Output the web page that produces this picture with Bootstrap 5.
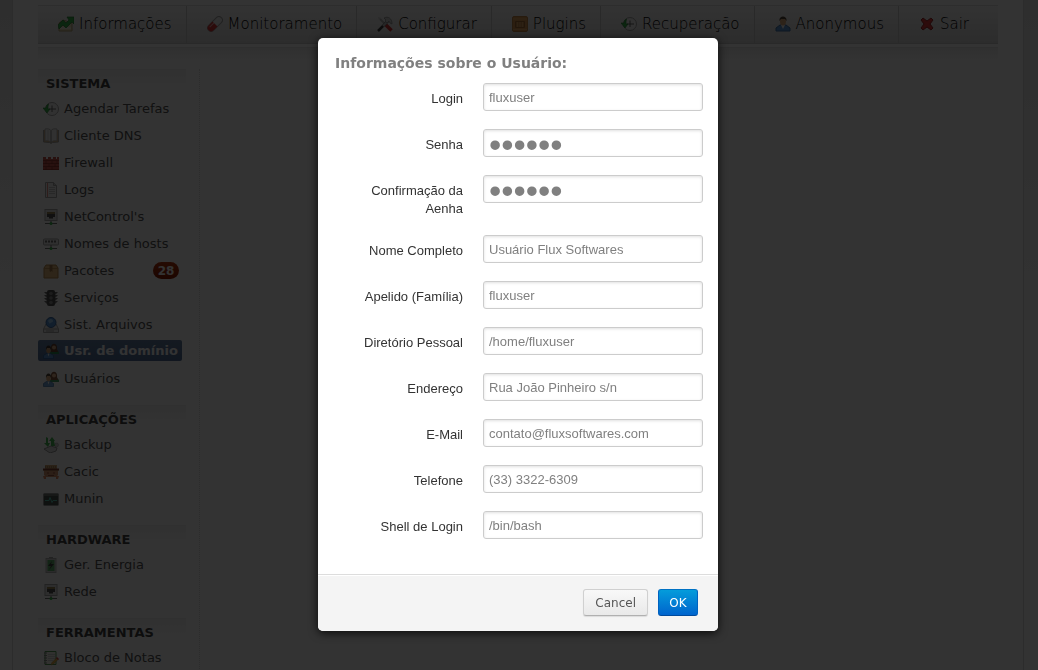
<!DOCTYPE html>
<html lang="pt-br">
<head>
<meta charset="utf-8">
<meta name="viewport" content="width=device-width, initial-scale=1">
<title>Usuários de domínio</title>
<link href="https://cdn.jsdelivr.net/npm/bootstrap@5.3.0/dist/css/bootstrap.min.css" rel="stylesheet">
<style>
body{font-family:"DejaVu Sans",sans-serif;font-size:13px;line-height:18px;color:#333;background:#fff linear-gradient(#e6e6e6,#fafafa) no-repeat;background-size:100% 320px;padding-right:2px}
svg.ico{width:16px;height:16px;flex:none;display:block;opacity:.85}
.shell{max-width:1012px;min-height:100vh;background:#fff;border:solid #ddd;border-width:0 1px;padding:5px 25px 0}
.topmenu{border-top:1px solid #e2e2e2;border-bottom:1px solid #ccc;background:linear-gradient(#fcfcfc,#dcdcdc);height:39px}
.topmenu .nav-link{display:flex;align-items:center;gap:5px;height:36px;padding:0 14px 0 20px;color:#000;font-size:15px;font-weight:200;line-height:20px}
.topmenu .nav-item{height:37px}
.topmenu .nav-item+.nav-item{border-left:1px solid #ccc}
.undermenu{height:14px;margin-top:3px;border-top:1px solid #e6e6e6;background:linear-gradient(#eee,#fff)}
.sidemenu{width:162px;border-right:1px dotted #ddd;margin-top:8px}
.sidemenu h2{width:148px;height:26px;margin:0;padding:4px 8px 0;border-top:1px solid #eee;background:linear-gradient(#f2f2f2,#fff 18px);font-size:13px;font-weight:bold;line-height:20px;color:#444}
.sidemenu ul{margin-bottom:13px}
.sidemenu a{display:flex;align-items:center;gap:5px;width:144px;height:21px;margin:3px 0;padding:0 0 0 5px;border-radius:2px;color:#555;text-decoration:none;white-space:nowrap}
.sidemenu li{height:27px;overflow:hidden}
.sidemenu a.on{height:21px;margin:2px 0 4px;background:linear-gradient(#6480a4,#54709a);color:#fff;font-weight:bold}
.count{margin-left:auto;margin-right:3px;width:26px;height:17px;border-radius:9px;background:linear-gradient(#b83810,#8c1c00);color:#fff;font-size:12px;font-weight:bold;line-height:18px;text-align:center}
.modal-backdrop{--bs-backdrop-opacity:.8}
.modal{padding:38px 2px 0 0}
.modal-dialog{max-width:400px;margin:0 auto}
.modal-content{border:0;border-radius:5px;box-shadow:0 2px 10px rgba(0,0,0,.8);overflow:hidden}
.modal-title{font-size:14px;line-height:20px;font-weight:bold;color:#808080;padding:15px 17px 10px}
.modal-body{padding:0 15px 17px 17px;font-family:"Liberation Sans",sans-serif}
.field{display:flex;gap:20px;margin-bottom:18px;align-items:flex-start}
.field label{width:128px;padding-top:7px;margin-bottom:-1px;text-align:right;line-height:18px;color:#333}
.field .form-control{flex:1;min-width:0;height:28px;padding:4px 5px;border:1px solid #ccc;border-radius:3px;font-size:13px;line-height:18px;color:#808080;box-shadow:inset 0 1px 3px rgba(0,0,0,.12)}
.field .form-control[type=password]{padding:6px 5px 2px;font-family:"Liberation Sans",sans-serif;font-size:35px}
.modal-footer{height:57px;gap:10px;padding:14px 20px;border-top:1px solid #ddd;border-radius:0;background:#f4f4f4;box-shadow:inset 0 1px #fff;align-items:flex-start}
.modal-footer .btn{margin:0;height:27px;min-width:40px;border-radius:3px;font-size:12px;line-height:24px}
.btn-plain{padding:0 11px;border:1px solid #d0d0d0;border-bottom-color:#b0b0b0;background:linear-gradient(#f8f8f8,#e9e9e9);color:#555;box-shadow:0 1px 1px rgba(0,0,0,.1)}
.btn-blue{padding:0 10px;border:1px solid #0064cd;border-color:#0072c4 #0062c0 #004a9c;background:linear-gradient(#049cdb,#0064cd);color:#fff}
</style>
</head>
<body class="modal-open overflow-hidden">
<svg class="d-none" aria-hidden="true">
<symbol id="chart" viewBox="0 0 16 16"><path d="M1 7l4-3 9 3v8H1z" fill="#e8dcae" stroke="#a8935c"/><path d="M2 12h11" stroke="#fff"/><path d="M0 9l5-5 3 3 3-3-2-3h7v7l-2-2-6 6-3-3-4 4z" fill="#18b030" stroke="#087018" stroke-width=".7"/></symbol>
<symbol id="pill" viewBox="0 0 16 16"><g transform="rotate(-45 8 8)"><rect x="-1" y="4.500" width="18" height="7" rx="3.500" fill="#eee" stroke="#999"/><path d="M8 4.500H2.500a3.500 3.500 0 000 7H8z" fill="#d81818"/><path d="M2 6.500h12" stroke="#fff" opacity=".6"/></g></symbol>
<symbol id="tools" viewBox="0 0 16 16"><path d="M3 3l7 7" stroke="#aaa" stroke-width="2"/><path d="M9 9l5.500 5.500" stroke="#d01818" stroke-width="3.500"/><path d="M1 1l3 1-2 2z" fill="#ccc"/><path d="M1 15l10-10" stroke="#222" stroke-width="2.500"/><path d="M6 10l5-5" stroke="#bbb" stroke-width="2"/><path d="M7 2c4-2 8 0 8 6l-2-1-1-2-2 2-2-2 1-1z" fill="#ccc" stroke="#777" stroke-width=".7"/></symbol>
<symbol id="crate" viewBox="0 0 16 16"><rect x=".5" y=".5" width="15" height="15" rx="1.500" fill="#d98a35" stroke="#b8742c"/><path d="M3.500 5.500h9v6h-9z" fill="#c87c30" stroke="#9a5c1c"/><path d="M5.500 6v5M8 6v5M10.500 6v5" stroke="#e0a050"/><path d="M1 3h14M1 13.500h14" stroke="#e8a858"/></symbol>
<symbol id="clock" viewBox="0 0 16 16"><circle cx="9" cy="8" r="6.500" fill="#f4f4f4" stroke="#999"/><path d="M9 4.500V8h4M9 8v3M6 8h3" stroke="#444" stroke-width=".9" fill="none"/><path d="M5.500 3C3.500 4 3 5.500 3 7H0l4 5 3-4H5c0-2 0-3 .5-5z" fill="#18b030" stroke="#087018" stroke-width=".6"/></symbol>
<symbol id="person" viewBox="0 0 16 16"><path d="M1 15v-3l4-3h6l4 3v3z" fill="#4b8fd8" stroke="#225e9c"/><path d="M6 9l2 4 2-4z" fill="#fff"/><ellipse cx="8" cy="5.500" rx="3" ry="4" fill="#dca26a"/><path d="M4.500 5c-1-6 8-6 7 0l-1.500-2H6z" fill="#3a2a1a"/></symbol>
<symbol id="cross" viewBox="0 0 16 16"><path d="M2 4l2-2 4 3 4-3 2 2-3 4 3 4-2 2-4-3-4 3-2-2 3-4z" fill="#dc1818" stroke="#8c0808"/></symbol>
<symbol id="book" viewBox="0 0 16 16"><path d="M.5 2v12l6 .5 1.500 1 1.500-1 6-.5V2" fill="#d8a860" stroke="#999"/><path d="M2 1c3-.5 5 0 6 1.500C9 1 11 .5 14 1v12c-3-.5-5 0-6 1.500C7 13 5 12.500 2 13z" fill="#f4f4f4" stroke="#aaa"/><path d="M8 2.500v12" stroke="#777"/><path d="M5 2v10" stroke="#ccc"/></symbol>
<symbol id="wall" viewBox="0 0 16 16"><path d="M0 2h3v2h2V2h3v2h2V2h3v2h1V2h2v13H0z" fill="#c03c30"/><path d="M0 5.500h16M0 8.500h16M0 11.500h16M3 6v3M9 6v3M14 6v3M6 9v3M12 9v3M3 12v3M9 12v3M0 14.500h16" stroke="#7c1408" stroke-width=".8"/></symbol>
<symbol id="log" viewBox="0 0 16 16"><path d="M2.500.500h8l3 3v12h-11z" fill="#f2f2f2" stroke="#999"/><path d="M10.500.500v3h3" fill="#ccc" stroke="#999"/><path d="M4.500 1v14" stroke="#e08070"/><path d="M6 5.500h6M6 7.500h6M6 9.500h6M6 11.500h6" stroke="#bbb"/></symbol>
<symbol id="net" viewBox="0 0 16 16"><rect x="2" y=".5" width="12" height="11" fill="#ddd" stroke="#999"/><path d="M4 3h8v5h-2v1.500H6V8H4z" fill="#333"/><path d="M5 3v2M7 3v2M9 3v2M11 3v2" stroke="#e0b040"/><path d="M8 12v3M2 14.500h12" stroke="#555"/><circle cx="8" cy="14.500" r="1.500" fill="#18b030"/></symbol>
<symbol id="host" viewBox="0 0 16 16"><rect x=".5" y="3" width="15" height="6" rx="1" fill="#e8e8e8" stroke="#999"/><path d="M2 5.500h12" stroke="#555" stroke-width="2" stroke-dasharray="2 1"/><path d="M8 9v4M2 12.500h12" stroke="#555"/><circle cx="8" cy="12.500" r="1.500" fill="#18b030"/></symbol>
<symbol id="box" viewBox="0 0 16 16"><path d="M1 5l2-3h10l2 3v10H1z" fill="#e2ae68" stroke="#a87430"/><path d="M1 5.500h14" stroke="#b88440"/><path d="M6.500 2h3v7l-1-1-1 1-1-1z" fill="#96642c"/></symbol>
<symbol id="light" viewBox="0 0 16 16"><path d="M1 2h14l-3 3h3l-3 3h3l-3 3h3l-3 3H4l-3-3h3L1 8h3L1 5h3z" fill="#555"/><rect x="4" y="0" width="8" height="16" rx="2" fill="#333"/><circle cx="8" cy="3.500" r="1.800" fill="#777"/><circle cx="8" cy="8" r="1.800" fill="#777"/><circle cx="8" cy="12.500" r="1.800" fill="#777"/></symbol>
<symbol id="disk" viewBox="0 0 16 16"><path d="M3 7h10l2.500 5v3.500H.5V12z" fill="#e6e6e6" stroke="#999"/><path d="M1 12h14M3 14h8" stroke="#999"/><circle cx="8" cy="5.500" r="5" fill="#3a86d8" stroke="#174c90"/><path d="M5 4c2-3 5-2 5 0s-3 1-3 3" fill="#8cc4f4"/></symbol>
<symbol id="users" viewBox="0 0 16 16"><path d="M7 11V9l2-2h5l2 2v2z" fill="#249048"/><path d="M8 6c-1-7 7-7 6 0l1 3H8z" fill="#70381c"/><circle cx="11" cy="4.500" r="2" fill="#e4b080"/><path d="M.5 15.500v-3l3-2h4l3 2v3z" fill="#5b97d8" stroke="#225e9c" stroke-width=".7"/><path d="M4.500 10.500l1 3 1-3z" fill="#fff"/><ellipse cx="5.500" cy="7" rx="2.300" ry="3.200" fill="#dca26a"/><path d="M3 7c-1-6 6-6 5 0L7 5H4z" fill="#3a2a1a"/></symbol>
<symbol id="backup" viewBox="0 0 16 16"><path d="M1 12l7-3 6 2-1 3-6 2z" fill="#ddd" stroke="#888"/><circle cx="13.500" cy="8" r="2" fill="#ccc" stroke="#888" stroke-width=".5"/><path d="M3 0v6H1l4 4 2-4H5V1z" fill="#28b038"/><path d="M8 9V4H6l3-4 3 4h-1l1 5z" fill="#28b038"/></symbol>
<symbol id="cacic" viewBox="0 0 16 16"><path d="M2 1h12v4l2 2H0l2-2z" fill="#c8965a"/><path d="M2 3h12" stroke="#6e4a20" stroke-dasharray="1 1"/><path d="M0 5.500h16" stroke="#6c2410" stroke-width="2"/><path d="M1 7h14v4l-2 2H3l-2-2z" fill="#d08458"/><path d="M4 9h2M10 9h2M5 11.500h6" stroke="#8c3820"/><path d="M0 12h3v3H1zM13 12h3l-1 3h-2z" fill="#e07848"/></symbol>
<symbol id="munin" viewBox="0 0 16 16"><rect x=".5" y="2.500" width="15" height="12" rx="1" fill="#303836" stroke="#888"/><path d="M1 4h14" stroke="#888"/><path d="M2 9.500h4l1-3 2 5 1-2h4" fill="none" stroke="#40c0a8"/></symbol>
<symbol id="battery" viewBox="0 0 16 16"><path d="M6 0h4v2H6z" fill="#999"/><rect x="3" y="1.500" width="10" height="14" fill="#ccc" stroke="#aaa"/><path d="M4.500 3h7v11h-7z" fill="#44a854"/><path d="M9 4L5 9h3l-2 4 5-6H8z" fill="#222"/></symbol>
<symbol id="notes" viewBox="0 0 16 16"><path d="M2 1.500h11v13H2z" fill="#f0f0e8" stroke="#3a8c3a"/><path d="M5 4.500h7M5 6.500h7M5 8.500h7M5 10.500h5" stroke="#ccc"/><path d="M1 3h3M1 5.500h3M1 8h3M1 10.500h3M1 13h3" stroke="#777"/><path d="M8 15l1-2.500 4.500-4.500 1.500 1.500-4.500 4.500z" fill="#e8a828" stroke="#99641a" stroke-width=".5"/><path d="M13 8l1-1 2 2-1 1z" fill="#d82020"/></symbol>
</svg>

<div class="shell mx-auto">
  <nav class="topmenu" aria-label="Menu principal">
    <ul class="nav flex-nowrap">
      <li class="nav-item"><a class="nav-link" href="#"><svg class="ico"><use href="#chart"/></svg>Informações</a></li>
      <li class="nav-item"><a class="nav-link" href="#"><svg class="ico"><use href="#pill"/></svg>Monitoramento</a></li>
      <li class="nav-item"><a class="nav-link" href="#"><svg class="ico"><use href="#tools"/></svg>Configurar</a></li>
      <li class="nav-item"><a class="nav-link" href="#"><svg class="ico"><use href="#crate"/></svg>Plugins</a></li>
      <li class="nav-item"><a class="nav-link" href="#"><svg class="ico"><use href="#clock"/></svg>Recuperação</a></li>
      <li class="nav-item"><a class="nav-link" href="#"><svg class="ico"><use href="#person"/></svg>Anonymous</a></li>
      <li class="nav-item"><a class="nav-link" href="#"><svg class="ico"><use href="#cross"/></svg>Sair</a></li>
    </ul>
  </nav>
  <div class="undermenu"></div>
  <aside class="sidemenu">
    <h2>SISTEMA</h2>
    <ul class="list-unstyled">
      <li><a href="#"><svg class="ico"><use href="#clock"/></svg>Agendar Tarefas</a></li>
      <li><a href="#"><svg class="ico"><use href="#book"/></svg>Cliente DNS</a></li>
      <li><a href="#"><svg class="ico"><use href="#wall"/></svg>Firewall</a></li>
      <li><a href="#"><svg class="ico"><use href="#log"/></svg>Logs</a></li>
      <li><a href="#"><svg class="ico"><use href="#net"/></svg>NetControl's</a></li>
      <li><a href="#"><svg class="ico"><use href="#host"/></svg>Nomes de hosts</a></li>
      <li><a href="#"><svg class="ico"><use href="#box"/></svg>Pacotes <span class="count">28</span></a></li>
      <li><a href="#"><svg class="ico"><use href="#light"/></svg>Serviços</a></li>
      <li><a href="#"><svg class="ico"><use href="#disk"/></svg>Sist. Arquivos</a></li>
      <li><a href="#" class="on" aria-current="page"><svg class="ico"><use href="#users"/></svg>Usr. de domínio</a></li>
      <li><a href="#"><svg class="ico"><use href="#users"/></svg>Usuários</a></li>
    </ul>
    <h2>APLICAÇÕES</h2>
    <ul class="list-unstyled">
      <li><a href="#"><svg class="ico"><use href="#backup"/></svg>Backup</a></li>
      <li><a href="#"><svg class="ico"><use href="#cacic"/></svg>Cacic</a></li>
      <li><a href="#"><svg class="ico"><use href="#munin"/></svg>Munin</a></li>
    </ul>
    <h2>HARDWARE</h2>
    <ul class="list-unstyled">
      <li><a href="#"><svg class="ico"><use href="#battery"/></svg>Ger. Energia</a></li>
      <li><a href="#"><svg class="ico"><use href="#net"/></svg>Rede</a></li>
    </ul>
    <h2>FERRAMENTAS</h2>
    <ul class="list-unstyled mb-0">
      <li><a href="#"><svg class="ico"><use href="#notes"/></svg>Bloco de Notas</a></li>
    </ul>
  </aside>
</div>

<div class="modal-backdrop show"></div>
<div class="modal d-block" role="dialog" aria-modal="true" aria-labelledby="dlgTitle">
  <div class="modal-dialog">
    <form class="modal-content">
      <h1 class="modal-title" id="dlgTitle">Informações sobre o Usuário:</h1>
      <div class="modal-body">
        <div class="field"><label for="login">Login</label><input class="form-control" id="login" type="text" value="fluxuser"></div>
        <div class="field"><label for="senha">Senha</label><input class="form-control" id="senha" type="password" value="123456"></div>
        <div class="field"><label for="conf">Confirmação da Aenha</label><input class="form-control" id="conf" type="password" value="123456"></div>
        <div class="field"><label for="nome">Nome Completo</label><input class="form-control" id="nome" type="text" value="Usuário Flux Softwares"></div>
        <div class="field"><label for="apelido">Apelido (Família)</label><input class="form-control" id="apelido" type="text" value="fluxuser"></div>
        <div class="field"><label for="dir">Diretório Pessoal</label><input class="form-control" id="dir" type="text" value="/home/fluxuser"></div>
        <div class="field"><label for="end">Endereço</label><input class="form-control" id="end" type="text" value="Rua João Pinheiro s/n"></div>
        <div class="field"><label for="mail">E-Mail</label><input class="form-control" id="mail" type="text" value="contato@fluxsoftwares.com"></div>
        <div class="field"><label for="tel">Telefone</label><input class="form-control" id="tel" type="text" value="(33) 3322-6309"></div>
        <div class="field"><label for="shell">Shell de Login</label><input class="form-control" id="shell" type="text" value="/bin/bash"></div>
      </div>
      <div class="modal-footer">
        <button type="button" class="btn btn-plain">Cancel</button>
        <button type="submit" class="btn btn-blue">OK</button>
      </div>
    </form>
  </div>
</div>
<script src="https://cdn.jsdelivr.net/npm/bootstrap@5.3.0/dist/js/bootstrap.bundle.min.js"></script>
</body>
</html>
